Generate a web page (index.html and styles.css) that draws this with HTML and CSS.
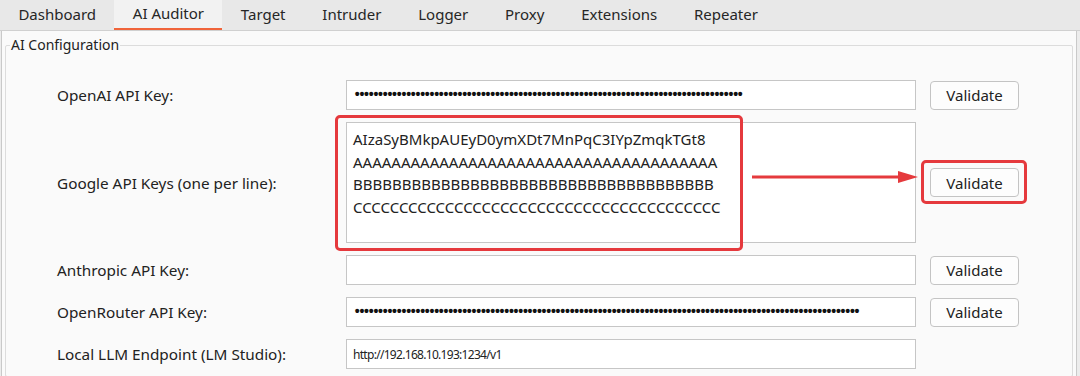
FILE: index.html
```html
<!DOCTYPE html>
<html>
<head>
<meta charset="utf-8">
<link rel="stylesheet" href="styles.css">
</head>
<body>
<div class="app">
  <nav class="tabs">
    <div class="tab">Dashboard</div>
    <div class="tab active">AI Auditor</div>
    <div class="tab">Target</div>
    <div class="tab">Intruder</div>
    <div class="tab">Logger</div>
    <div class="tab">Proxy</div>
    <div class="tab">Extensions</div>
    <div class="tab">Repeater</div>
  </nav>
  <div class="panel">
    <fieldset class="config">
      <legend>AI Configuration</legend>
      <div class="grid">
        <label class="lbl">OpenAI API Key:</label>
        <div class="field"><span class="dots">•••••••••••••••••••••••••••••••••••••••••••••••••••••••••••••••••••••••••••••••••••</span></div>
        <button class="btn">Validate</button>

        <label class="lbl">Google API Keys (one per line):</label>
        <div class="area-wrap">
          <div class="field area">AIzaSyBMkpAUEyD0ymXDt7MnPqC3IYpZmqkTGt8<br>AAAAAAAAAAAAAAAAAAAAAAAAAAAAAAAAAAAAAA<br>BBBBBBBBBBBBBBBBBBBBBBBBBBBBBBBBBBBBB<br>CCCCCCCCCCCCCCCCCCCCCCCCCCCCCCCCCCCCCCCC</div>
          <div class="hl hl-area"></div>
          <svg class="arrow" width="170" height="14" viewBox="0 0 170 14">
            <line x1="0" y1="7" x2="150" y2="7" stroke="#e53a3d" stroke-width="3"/>
            <polygon points="146,1 166,7 146,13" fill="#e53a3d"/>
          </svg>
        </div>
        <div class="btn-wrap"><button class="btn">Validate</button><div class="hl hl-btn"></div></div>

        <label class="lbl">Anthropic API Key:</label>
        <div class="field"></div>
        <button class="btn">Validate</button>

        <label class="lbl">OpenRouter API Key:</label>
        <div class="field"><span class="dots">••••••••••••••••••••••••••••••••••••••••••••••••••••••••••••••••••••••••••••••••••••••••••••••••••••••••••••</span></div>
        <button class="btn">Validate</button>

        <label class="lbl">Local LLM Endpoint (LM Studio):</label>
        <div class="field"><span class="url">http://192.168.10.193:1234/v1</span></div>
        <div></div>
      </div>
    </fieldset>
  </div>
</div>
</body>
</html>
```

FILE: styles.css
```css
html, body {
  margin: 0;
  padding: 0;
  background: #ececec;
}
body {
  width: 1080px;
  height: 376px;
  overflow: hidden;
  font-family: "Noto Sans", "Open Sans", sans-serif;
  color: #1f1f1f;
}
.app {
  display: flex;
  flex-direction: column;
  height: 376px;
  overflow: hidden;
}
.tabs {
  display: flex;
  height: 31px;
  flex: none;
  background: #e8e8e8;
  border-bottom: 1px solid #d0d0d0;
  box-sizing: border-box;
}
.tab {
  font-size: 15px;
  line-height: 29px;
  padding: 0 18.4px;
  color: #262626;
  white-space: nowrap;
}
.tab.active {
  background: #f2f2f2;
  border-bottom: 2px solid #f0643a;
  line-height: 27px;
}
.panel {
  flex: 1;
  min-height: 0;
  overflow: hidden;
  margin: 0 3px 0 1px;
  border-left: 1px solid #c9c9c9;
  border-right: 1px solid #c9c9c9;
  background: #fafafa;
  padding: 6px 3px 0 3px;
}
.config {
  margin: 0;
  padding: 0;
  border: 1px solid #dcdcdc;
  border-radius: 2px;
  height: 340px;
  box-sizing: border-box;
}
legend {
  font-size: 14px;
  padding: 0 1px;
  margin-left: 4px;
  color: #222;
  line-height: 16px;
}
.grid {
  display: grid;
  grid-template-columns: 275px 570px 89px;
  column-gap: 14px;
  row-gap: 12px;
  padding: 27px 0 0 51px;
  align-items: center;
}
.lbl {
  font-size: 15.3px;
  color: #222;
}
.field {
  height: 30px;
  box-sizing: border-box;
  background: #fff;
  border: 1px solid #c6c6c6;
  display: flex;
  align-items: center;
  padding: 0 6px;
}
.dots {
  font-family: "Liberation Mono", monospace;
  font-size: 14px;
  font-weight: bold;
  letter-spacing: -3.73px;
  color: #111;
}
.url {
  font-size: 12px;
  letter-spacing: -0.7px;
  color: #222;
}
.area-wrap {
  position: relative;
}
.field.area {
  height: 121px;
  display: block;
  padding: 5px 6px;
  font-size: 15px;
  line-height: 22.5px;
  color: #222;
  white-space: nowrap;
  overflow: hidden;
}
.btn {
  height: 29px;
  width: 89px;
  box-sizing: border-box;
  background: #fdfdfd;
  border: 1px solid #c4c4c4;
  border-radius: 4px;
  font-family: "Noto Sans", "Open Sans", sans-serif;
  font-size: 15px;
  color: #222;
  padding: 0;
}
.btn-wrap {
  position: relative;
  height: 29px;
}
.hl {
  position: absolute;
  border: 3px solid #e5393d;
  border-radius: 5px;
  box-sizing: border-box;
  pointer-events: none;
}
.hl-area {
  left: -11px;
  top: -7px;
  width: 408px;
  height: 136px;
}
.hl-btn {
  left: -9px;
  top: -8px;
  width: 106px;
  height: 44px;
}
.arrow {
  position: absolute;
  left: 406px;
  top: 48px;
}
```
